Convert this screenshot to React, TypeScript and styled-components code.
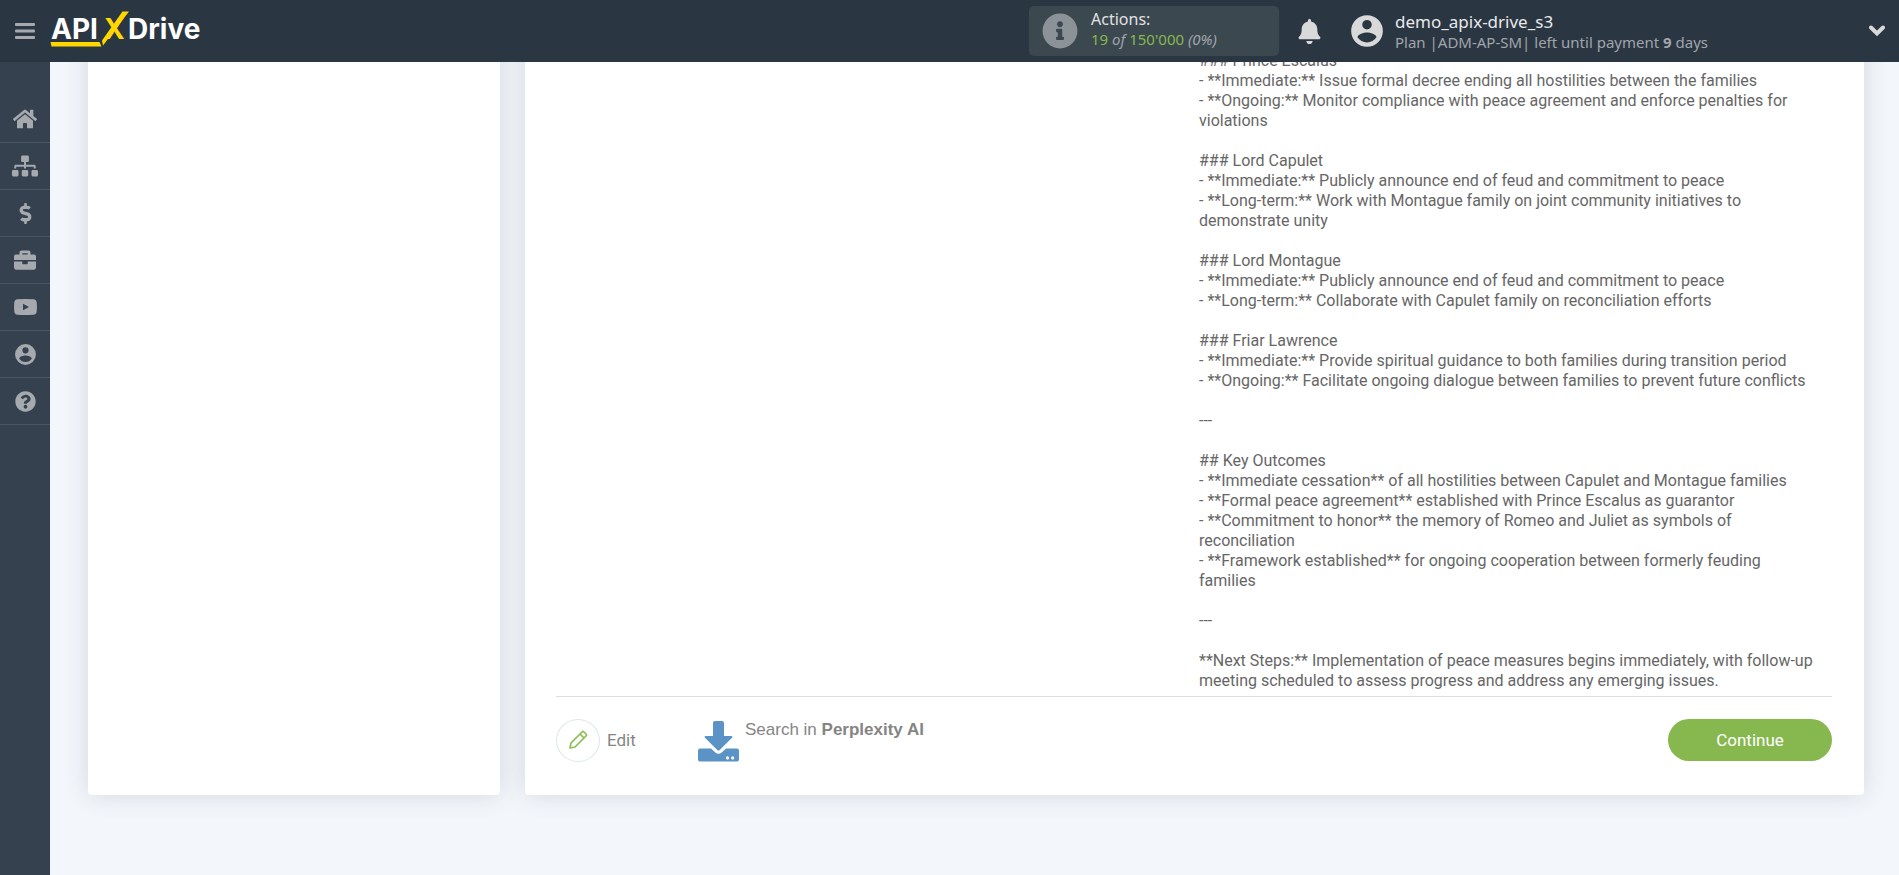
import React from "react";
import styled, { createGlobalStyle } from "styled-components";
import {
  FaBell,
  FaBriefcase,
  FaDollarSign,
  FaHome,
  FaInfoCircle,
  FaQuestionCircle,
  FaSitemap,
} from "react-icons/fa";

const GlobalStyle = createGlobalStyle`
  *, *::before, *::after { box-sizing: border-box; }
  body {
    margin: 0;
    background: #f3f6fb;
    font-family: Roboto, "Liberation Sans", sans-serif;
    color: #666;
  }
  button { font: inherit; border: 0; padding: 0; background: none; cursor: pointer; }
  a { color: inherit; text-decoration: none; }
  svg { display: block; }
`;

const Shell = styled.div`
  display: flex;
  flex-direction: column;
  height: 100vh;
  overflow: hidden;
`;

const Header = styled.header`
  display: flex;
  align-items: center;
  flex: none;
  height: 62px;
  background: #2b3643;
  font-family: "Noto Sans", "Open Sans", sans-serif;
`;

const MenuButton = styled.button`
  display: flex;
  justify-content: center;
  width: 50px;
  color: #a6aaae;
`;

const Logo = styled.a`
  display: block;
`;

const Actions = styled.section`
  display: flex;
  align-items: center;
  width: 250px;
  height: 50px;
  margin-left: auto;
  padding-left: 13px;
  gap: 13px;
  border-radius: 5px;
  background: #3c4850;
  color: #8b9298;
`;

const ActionsText = styled.div`
  padding-bottom: 4px;
  font-size: 16px;
  line-height: 20px;
  color: #e0e1e3;
`;

const Usage = styled.div`
  font-size: 15px;
  color: #a0a5aa;
  b { font-weight: 400; color: #84b84c; }
`;

const BellButton = styled.button`
  margin: 0 26px 0 18px;
  color: #d9d9d9;
`;

const Account = styled.button`
  display: flex;
  align-items: center;
  gap: 9px;
  width: 551px;
  padding-right: 14px;
  color: #d9d9d9;
  text-align: left;
`;

const AccountText = styled.span`
  flex: 1;
  display: flex;
  flex-direction: column;
  padding-top: 1px;
`;

const UserName = styled.span`
  font-size: 17px;
  line-height: 20px;
  color: #e8e9ea;
`;

const Plan = styled.span`
  font-size: 15px;
  line-height: 20px;
  color: #a0a5aa;
`;

const Body = styled.div`
  display: flex;
  flex: 1;
  min-height: 0;
`;

const Sidebar = styled.nav`
  flex: none;
  width: 50px;
  padding-top: 34px;
  background: #364150;
`;

const NavItem = styled.a`
  display: flex;
  align-items: center;
  justify-content: center;
  height: 47px;
  border-bottom: 1px solid #4a5564;
  color: #a6aaae;
`;

const Main = styled.main`
  display: flex;
  flex: 1;
  min-width: 0;
  align-items: stretch;
  align-content: flex-end;
  flex-wrap: wrap;
  gap: 25px;
  padding: 0 35px 80px 38px;
  overflow: hidden;
`;

const Card = styled.section<{ $grow?: boolean }>`
  display: flex;
  flex-direction: column;
  flex: ${(p) => (p.$grow ? "1" : "0 0 412px")};
  min-width: 0;
  padding: 24px 32px 33px 31px;
  border-radius: 4px;
  background: #fff;
  box-shadow: 0 0 25px rgba(60, 75, 90, 0.16);
`;

const Preview = styled.div`
  display: grid;
  grid-template-columns: 1fr 1fr;
  gap: 10px;
  padding-bottom: 5px;
  border-bottom: 1px solid #dedede;
`;

const Message = styled.div`
  grid-column: 2;
  padding-right: 15px;
  font-size: 16px;
  line-height: 20px;
  white-space: pre-line;
`;

const Footer = styled.footer`
  display: flex;
  align-items: center;
  padding-top: 21px;
  color: #858585;
`;

const EditButton = styled.button`
  display: flex;
  align-items: center;
  gap: 7px;
  width: 142px;
  font-size: 17px;
  color: #858585;
`;

const EditRing = styled.span`
  display: flex;
  align-items: center;
  justify-content: center;
  width: 44px;
  height: 43px;
  border: 1px solid #dde8e4;
  border-radius: 50%;
`;

const Source = styled.div`
  display: flex;
  gap: 6px;
  padding-top: 3px;
  font: 17px/18px "Liberation Sans", Arial, sans-serif;
`;

const Continue = styled.button`
  width: 164px;
  height: 42px;
  margin-left: auto;
  border-radius: 21px;
  background: #86b84f;
  color: #fff;
  font-size: 17px;
`;

const message = `### Prince Escalus
- **Immediate:** Issue formal decree ending all hostilities between the families
- **Ongoing:** Monitor compliance with peace agreement and enforce penalties for violations

### Lord Capulet
- **Immediate:** Publicly announce end of feud and commitment to peace
- **Long-term:** Work with Montague family on joint community initiatives to demonstrate unity

### Lord Montague
- **Immediate:** Publicly announce end of feud and commitment to peace
- **Long-term:** Collaborate with Capulet family on reconciliation efforts

### Friar Lawrence
- **Immediate:** Provide spiritual guidance to both families during transition period
- **Ongoing:** Facilitate ongoing dialogue between families to prevent future conflicts

---

## Key Outcomes
- **Immediate cessation** of all hostilities between Capulet and Montague families
- **Formal peace agreement** established with Prince Escalus as guarantor
- **Commitment to honor** the memory of Romeo and Juliet as symbols of reconciliation
- **Framework established** for ongoing cooperation between formerly feuding families

---

**Next Steps:** Implementation of peace measures begins immediately, with follow-up meeting scheduled to assess progress and address any emerging issues.`;

const UserIcon = ({ size }: { size: number }) => (
  <svg width={size} height={size} viewBox="0 0 24 24" fill="currentColor" aria-hidden="true">
    <path d="M12 19.200C9.500 19.200 7.290 17.920 6 16C6.030 14 10 12.900 12 12.900C14 12.900 17.970 14 18 16C16.710 17.920 14.500 19.200 12 19.200M12 5A3 3 0 0 1 15 8A3 3 0 0 1 12 11A3 3 0 0 1 9 8A3 3 0 0 1 12 5M12 2A10 10 0 0 0 2 12A10 10 0 0 0 12 22A10 10 0 0 0 22 12A10 10 0 0 0 12 2Z" fillRule="evenodd" />
  </svg>
);

const VideoIcon = () => (
  <svg width="23" height="16" viewBox="0 0 23 16" fill="currentColor" aria-hidden="true">
    <path d="M3.500 0.300Q11.500-.3 19.500.3Q22.500.5 22.700 3.500Q23.200 8 22.700 12.500Q22.500 15.500 19.500 15.700Q11.500 16.300 3.500 15.700Q.5 15.500.3 12.500Q-.2 8 .3 3.500Q.5.5 3.500.3ZM9 4.700V11.300L15 8Z" fillRule="evenodd" />
  </svg>
);

const navItems = [
  { label: "Home", icon: <FaHome size={24} /> },
  { label: "Connections", icon: <FaSitemap size={26} /> },
  { label: "Billing", icon: <FaDollarSign size={21} /> },
  { label: "Services", icon: <FaBriefcase size={22} /> },
  { label: "Video", icon: <VideoIcon /> },
  { label: "Profile", icon: <UserIcon size={25} /> },
  { label: "Help", icon: <FaQuestionCircle size={21} /> },
];

const PencilIcon = () => (
  <svg width="20" height="20" viewBox="0 0 20 20" fill="none" stroke="#8bbf55" strokeWidth="1.7" strokeLinejoin="round" aria-hidden="true">
    <path d="M2 18l1-5L14 2q1-1 2 0l2 2q1 1 0 2L7 17z" />
    <path d="M12 4l4 4" />
  </svg>
);

const DownloadIcon = () => (
  <svg width="41" height="41" viewBox="0 0 41 41" fill="#5b93c7" aria-hidden="true">
    <path d="M17 0h7q2 0 2 2v13h7q2.500 0 .8 2L21.700 29q-1.200 1.200-2.400 0L7.200 17q-1.700-2 .8-2h7V2q0-2 2-2z" />
    <path d="M2 27.500h11l4.300 4.100q3.200 2.500 6.400 0l4.300-4.100h11q2 0 2 2V38.500q0 2-2 2H2q-2 0-2-2v-9q0-2 2-2zM29.500 35.300a1.600 1.600 0 1 0 0 3.200a1.600 1.600 0 0 0 0-3.200zM34.700 35.300a1.600 1.600 0 1 0 0 3.200a1.600 1.600 0 0 0 0-3.200z" fillRule="evenodd" />
  </svg>
);

const ChevronIcon = () => (
  <svg width="16" height="12" viewBox="0 0 16 12" fill="none" stroke="#d9d9d9" strokeWidth="4" aria-hidden="true">
    <path d="M2 2.500l6 6l6-6" strokeLinecap="round" />
  </svg>
);

export default function App() {
  return (
    <Shell>
      <GlobalStyle />
      <Header>
        <MenuButton aria-label="Menu">
          <svg width="20" height="16" viewBox="0 0 20 16" fill="currentColor" aria-hidden="true">
            <rect width="20" height="3" rx="1" />
            <rect y="6.500" width="20" height="3" rx="1" />
            <rect y="13" width="20" height="3" rx="1" />
          </svg>
        </MenuButton>
        <Logo href="#" aria-label="ApiX-Drive">
          <svg width="160" height="62" viewBox="0 0 160 62" fontFamily="Inter, sans-serif" fontWeight="700" fontSize="28">
            <path d="M0.500 42h49l2 4.500h-50z" fill="#ffd800" />
            <path d="M72.500 11.500h6.500L53 45.500l-1-5z" fill="#ffd800" />
            <text x="1" y="39" fill="#fff">API</text>
            <text x="54" y="39" fill="#ffd800">X</text>
            <text x="78" y="39" fill="#fff">Drive</text>
          </svg>
        </Logo>
        <Actions>
          <FaInfoCircle size={36} />
          <ActionsText>
            Actions:
            <Usage>
              <b>19</b> <i>of</i> <b>150'000</b> <i>(0%)</i>
            </Usage>
          </ActionsText>
        </Actions>
        <BellButton aria-label="Notifications">
          <FaBell size={25} />
        </BellButton>
        <Account>
          <UserIcon size={38} />
          <AccountText>
            <UserName>demo_apix-drive_s3</UserName>
            <Plan>
              Plan |ADM-AP-SM| left until payment <b>9</b> days
            </Plan>
          </AccountText>
          <ChevronIcon />
        </Account>
      </Header>
      <Body>
        <Sidebar>
          {navItems.map((item) => (
            <NavItem key={item.label} href="#" aria-label={item.label}>
              {item.icon}
            </NavItem>
          ))}
        </Sidebar>
        <Main>
          <Card />
          <Card $grow>
            <Preview>
              <Message>{message}</Message>
            </Preview>
            <Footer>
              <EditButton>
                <EditRing>
                  <PencilIcon />
                </EditRing>
                Edit
              </EditButton>
              <Source>
                <DownloadIcon />
                <span>
                  Search in <b>Perplexity AI</b>
                </span>
              </Source>
              <Continue>Continue</Continue>
            </Footer>
          </Card>
        </Main>
      </Body>
    </Shell>
  );
}
